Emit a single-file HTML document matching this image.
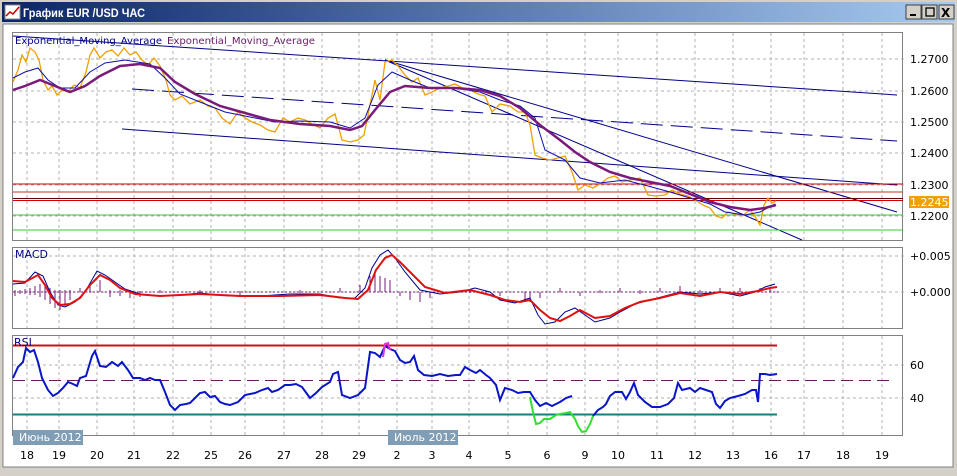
<!DOCTYPE html>
<html><head><meta charset="utf-8"><style>
body{margin:0;width:957px;height:471px;overflow:hidden;background:#d4d0c8;font-family:"Liberation Sans","DejaVu Sans",sans-serif}
svg text{font-family:"DejaVu Sans","Liberation Sans",sans-serif;font-size:11px}
</style></head><body>
<svg width="957" height="471" xmlns="http://www.w3.org/2000/svg">
<defs><linearGradient id="tb" x1="0" x2="1"><stop offset="0" stop-color="#0a246a"/><stop offset="1" stop-color="#a6caf0"/></linearGradient></defs>
<rect x="0" y="0" width="957" height="471" fill="#d4d0c8"/>
<rect x="2" y="2" width="953" height="20" fill="url(#tb)"/>
<rect x="5" y="5" width="15" height="14" fill="#fff" stroke="#888"/>
<polyline points="6,16 10,12 13,14 19,7" fill="none" stroke="#c00" stroke-width="1.5"/>
<text x="23" y="17" fill="#fff" font-weight="bold" textLength="122" lengthAdjust="spacingAndGlyphs" style="font-family:'Liberation Sans',sans-serif;font-size:12px">График EUR /USD  ЧАС</text>
<g fill="#d4d0c8" stroke="#404040"><rect x="906" y="5" width="15" height="14"/><rect x="922" y="5" width="15" height="14"/><rect x="939" y="5" width="15" height="14"/></g>
<rect x="910" y="14" width="6" height="2" fill="#000"/>
<rect x="926" y="8" width="8" height="8" fill="none" stroke="#000" stroke-width="1.3"/>
<text x="941" y="17" font-weight="bold" style="font-size:12px">X</text>
<rect x="3" y="24" width="950" height="443" fill="#fff" stroke="#808080"/>
<g fill="#fff" stroke="#808080"><rect x="12.5" y="32.5" width="890" height="208"/><rect x="12.5" y="247.5" width="890" height="81"/><rect x="12.5" y="335.5" width="890" height="100"/></g>
<g stroke="#b0b0b0" stroke-dasharray="3,3">
<path d="M27 33V241M59 33V241M97 33V241M134 33V241M173 33V241M211 33V241M245 33V241M284 33V241M322 33V241M359 33V241M397 33V241M432 33V241M469 33V241M508 33V241M547 33V241M585 33V241M618 33V241M657 33V241M695 33V241M733 33V241M771 33V241M804 33V241M843 33V241M882 33V241"/>
<path d="M27 248V328M59 248V328M97 248V328M134 248V328M173 248V328M211 248V328M245 248V328M284 248V328M322 248V328M359 248V328M397 248V328M432 248V328M469 248V328M508 248V328M547 248V328M585 248V328M618 248V328M657 248V328M695 248V328M733 248V328M771 248V328M804 248V328M843 248V328M882 248V328"/>
<path d="M27 336V435M59 336V435M97 336V435M134 336V435M173 336V435M211 336V435M245 336V435M284 336V435M322 336V435M359 336V435M397 336V435M432 336V435M469 336V435M508 336V435M547 336V435M585 336V435M618 336V435M657 336V435M695 336V435M733 336V435M771 336V435M804 336V435M843 336V435M882 336V435"/>
<path d="M13 59H906M13 91H906M13 122H906M13 153H906M13 185H906M13 216H906M13 256H906M13 292H906M13 365H906M13 398H906"/>
</g>
<g fill="none" stroke="#00008b" stroke-width="1">
<line x1="13" y1="36" x2="897" y2="95"/>
<line x1="122" y1="129" x2="897" y2="185"/>
<line x1="132" y1="89" x2="897" y2="141" stroke-dasharray="22,8"/>
<line x1="385" y1="60" x2="897" y2="212"/>
<line x1="385" y1="60" x2="802" y2="240"/>
</g>
<g stroke-width="1"><line x1="13" y1="184" x2="903" y2="184" stroke="#c00"/><line x1="13" y1="192" x2="903" y2="192" stroke="#c03030"/><line x1="13" y1="198.5" x2="903" y2="198.5" stroke="#600"/><line x1="13" y1="200.5" x2="903" y2="200.5" stroke="#c00"/>
<line x1="13" y1="215" x2="903" y2="215" stroke="#3c3"/><line x1="13" y1="230" x2="903" y2="230" stroke="#3c3"/></g>
<polyline fill="none" stroke="#f0a000" stroke-width="1.3" points="13,82 18,70 22,55 26,62 30,48 35,52 39,60 43,80 48,90 52,86 57,95 62,90 68,92 74,85 80,88 86,72 90,55 94,48 100,58 106,52 112,50 118,56 124,48 130,55 136,52 142,60 148,65 154,58 160,66 166,80 170,95 175,100 182,96 190,104 200,100 208,106 215,108 222,118 230,124 238,112 245,118 252,122 260,125 268,130 275,132 283,118 290,122 298,118 305,120 312,124 320,128 328,118 335,114 342,140 350,142 358,140 364,135 370,105 375,80 380,100 385,62 392,60 398,66 405,75 412,82 418,78 425,95 432,92 440,88 448,86 455,84 462,88 470,90 478,94 485,96 492,112 500,104 510,106 518,112 525,112 530,125 535,155 542,158 550,160 558,158 565,156 572,172 578,190 585,185 593,188 600,184 608,178 615,176 622,182 630,180 640,178 648,195 656,196 665,195 672,190 680,194 688,196 695,200 703,205 710,208 716,216 722,218 728,212 735,214 742,216 750,210 756,218 760,225 764,205 768,198 772,203 776,201"/>
<polyline fill="none" stroke="#1010b0" stroke-width="1" points="13,78 25,72 38,68 48,80 60,88 75,88 90,72 105,63 125,60 150,64 165,78 180,94 200,102 225,112 250,117 275,122 300,121 330,122 350,128 365,118 378,85 392,72 410,80 430,88 455,88 480,92 500,100 520,106 535,118 545,150 565,160 580,178 600,183 625,180 648,186 670,192 690,198 710,204 725,212 745,215 760,212 775,204"/>
<polyline fill="none" stroke="#7a1a7a" stroke-width="2.5" points="13,90 25,86 40,80 55,86 70,92 85,86 100,76 120,66 140,64 160,68 175,82 195,94 220,106 245,113 270,120 300,124 330,126 350,130 362,126 375,110 390,92 405,86 430,88 455,88 480,90 500,96 520,108 540,125 560,140 575,152 590,162 610,172 630,178 650,182 670,186 690,194 710,202 730,207 750,210 765,208 776,205"/>
<text x="15" y="44" fill="#00008b" textLength="147" lengthAdjust="spacingAndGlyphs" style="font-size:10px">Exponential_Moving_Average</text>
<text x="167" y="44" fill="#6a1a6a" textLength="148" lengthAdjust="spacingAndGlyphs" style="font-size:10px">Exponential_Moving_Average</text>
<g fill="#000"><text x="910" y="63">1.2700</text><text x="910" y="95">1.2600</text><text x="910" y="126">1.2500</text><text x="910" y="157">1.2400</text><text x="910" y="189">1.2300</text><text x="910" y="220">1.2200</text>
<text x="910" y="260">+0.005</text><text x="910" y="296">+0.000</text><text x="910" y="369">60</text><text x="910" y="402">40</text></g>
<rect x="909" y="196" width="40" height="12" fill="#f0a000"/><text x="910" y="206" fill="#fff">1.2245</text>
<text x="15" y="258" fill="#00008b">MACD</text>
<g stroke="#7a1a7a" stroke-width="1">
<path d="M15 290V296M20 290V294M25 289V294M30 288V295M35 286V295M40 284V297M45 285V300M50 288V304M55 290V308M60 290V310M65 290V306M70 290V300M80 288V292M90 286V292M100 280V292M110 290V297M120 290V296M130 290V298M140 291V297M160 290V293M200 290V293M240 291V295M300 290V293M340 288V292M360 285V292M370 276V292M375 274V292M380 276V292M385 278V292M390 280V292M400 292V296M410 292V300M420 292V302M430 292V298M470 290V293M500 292V296M525 292V300M530 292V302M540 292V298M560 288V292M580 292V296M600 290V293M620 288V292M640 290V294M660 288V292M680 286V292M700 290V293M720 288V292M740 288V292M760 288V292M770 288V292"/>
<path d="M13 292H780" stroke-dasharray="2,2"/>
</g>
<polyline fill="none" stroke="#00008b" points="13,284 25,283 35,272 43,276 50,292 58,305 65,307 75,302 85,292 97,271 105,275 115,282 125,289 140,294 160,296 180,295 200,293 230,296 260,296 290,294 320,294 340,298 355,298 365,288 372,268 380,255 388,250 395,258 405,272 420,290 440,294 460,292 475,288 490,292 500,300 515,303 530,298 538,315 545,324 555,322 565,312 575,308 585,315 595,322 610,318 620,312 635,304 650,300 665,296 680,292 700,294 720,292 740,296 755,292 765,287 775,284"/>
<polyline fill="none" stroke="#e01010" stroke-width="2" points="13,281 25,282 38,275 45,285 52,298 60,305 70,304 80,298 90,285 100,275 110,280 120,288 135,294 160,296 200,294 240,296 280,296 320,295 345,298 358,299 368,290 376,270 385,258 392,255 400,262 410,272 425,287 445,293 470,290 490,295 505,300 520,302 530,300 540,310 550,318 560,321 570,316 580,310 595,318 610,316 625,308 640,302 660,298 680,293 700,296 720,292 740,294 758,291 770,288 777,287"/>
<line x1="13" y1="345.5" x2="777" y2="345.5" stroke="#d01010" stroke-width="2"/>
<line x1="13" y1="380.5" x2="895" y2="380.5" stroke="#6a1a5a" stroke-dasharray="12,6"/>
<line x1="13" y1="414.5" x2="777" y2="414.5" stroke="#108080" stroke-width="2"/>
<text x="14" y="346" fill="#00008b">RSI</text>
<polyline fill="none" stroke="#0a14c8" stroke-width="2" points="13,378 18,367 23,362 26,348 30,352 34,350 38,362 42,378 48,390 53,396 58,393 63,388 68,382 73,384 77,386 80,378 86,376 92,356 95,351 100,366 106,367 112,362 118,366 122,362 128,370 133,378 140,378 145,380 150,378 155,380 160,380 165,392 170,405 175,410 180,405 186,404 190,403 195,398 200,393 205,392 210,397 215,396 220,402 225,404 230,405 238,402 245,395 255,393 262,390 268,388 272,392 278,390 285,385 290,385 296,384 302,387 310,398 316,393 322,387 330,382 333,374 338,372 342,395 350,398 358,395 365,388 370,352 375,353 380,357 385,346 390,349 395,351 400,360 405,363 410,362 414,356 418,370 424,375 432,376 440,374 448,376 456,375 460,375 465,367 470,370 476,373 480,370 486,375 490,378 496,385 500,400 505,388 512,390 518,393 524,392 530,392 535,400 540,406 546,403 552,406 560,402 566,398 572,396"/>
<polyline fill="none" stroke="#30e030" stroke-width="2" points="530,397 533,412 536,424 540,423 544,419 550,419 556,415 560,414 566,413 570,412 575,419 578,426 582,432 586,431 590,424 593,416"/>
<polyline fill="none" stroke="#0a14c8" stroke-width="2" points="593,416 598,410 603,407 606,404 610,396 615,392 622,392 626,399 630,392 634,383 638,395 645,402 652,407 660,407 668,404 674,398 678,383 682,390 690,388 695,392 700,388 706,390 712,392 716,404 720,408 725,401 730,398 738,396 745,394 752,390 756,390 758,402 760,374 765,374 770,375 777,374"/>
<polyline fill="none" stroke="#e030e0" stroke-width="2" points="383,357 385,344 388,343 390,350"/>
<rect x="13" y="430" width="70" height="15" fill="#7f9db5"/><text x="19" y="441" fill="#fff">Июнь 2012</text>
<rect x="388" y="430" width="70" height="15" fill="#7f9db5"/><text x="394" y="441" fill="#fff">Июль 2012</text>
<g fill="#000" text-anchor="middle"><text x="27" y="459">18</text><text x="59" y="459">19</text><text x="97" y="459">20</text><text x="134" y="459">21</text><text x="173" y="459">22</text><text x="211" y="459">25</text><text x="245" y="459">26</text><text x="284" y="459">27</text><text x="322" y="459">28</text><text x="359" y="459">29</text><text x="397" y="459">2</text><text x="432" y="459">3</text><text x="469" y="459">4</text><text x="508" y="459">5</text><text x="547" y="459">6</text><text x="585" y="459">9</text><text x="618" y="459">10</text><text x="657" y="459">11</text><text x="695" y="459">12</text><text x="733" y="459">13</text><text x="771" y="459">16</text><text x="804" y="459">17</text><text x="843" y="459">18</text><text x="882" y="459">19</text></g>
</svg>
</body></html>
